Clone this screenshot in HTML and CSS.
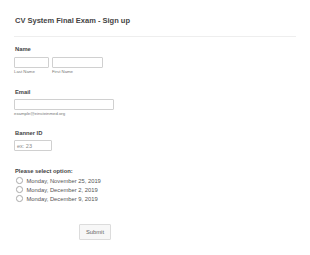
FILE: index.html
```html
<!DOCTYPE html>
<html>
<head>
<meta charset="utf-8">
<link rel="stylesheet" href="styles.css">
</head>
<body>
<form class="form">
  <h1 class="title">CV System Final Exam - Sign up</h1>
  <div class="rule"></div>

  <div class="field field-name">
    <div class="label">Name</div>
    <div class="name-row">
      <div class="sub">
        <div class="input input-last"></div>
        <div class="sublabel">Last Name</div>
      </div>
      <div class="sub">
        <div class="input input-first"></div>
        <div class="sublabel">First Name</div>
      </div>
    </div>
  </div>

  <div class="field field-email">
    <div class="label">Email</div>
    <div class="input input-email"></div>
    <div class="sublabel">example@einsteinmed.org</div>
  </div>

  <div class="field field-banner">
    <div class="label">Banner ID</div>
    <div class="input input-banner"><span class="placeholder">ex: 23</span></div>
  </div>

  <div class="field field-options">
    <div class="label">Please select option:</div>
    <div class="options">
      <div class="option"><span class="radio"></span><span>Monday, November 25, 2019</span></div>
      <div class="option"><span class="radio"></span><span>Monday, December 2, 2019</span></div>
      <div class="option"><span class="radio"></span><span>Monday, December 9, 2019</span></div>
    </div>
  </div>

  <div class="actions">
    <div class="button">Submit</div>
  </div>
</form>
</body>
</html>
```

FILE: styles.css
```css
html, body {
  margin: 0;
  padding: 0;
  background: #ffffff;
}
body {
  font-family: "Liberation Sans", Arial, sans-serif;
  color: #333;
}
.form {
  width: 282px;
  padding: 16px 0 0 14px;
  display: flex;
  flex-direction: column;
}
.title {
  margin: 0 0 0 1px;
  font-size: 7.5px;
  line-height: 9px;
  font-weight: bold;
  color: #444;
}
.rule {
  height: 1px;
  background: #eeeeee;
  margin-top: 11px;
}
.label {
  font-size: 5.8px;
  line-height: 7px;
  font-weight: bold;
  color: #444;
  margin-left: 1px;
}
.field-name { margin-top: 9px; }
.name-row {
  display: flex;
  gap: 3px;
  margin-top: 4px;
}
.input {
  height: 9px;
  border: 1px solid #d0d0d0;
  border-radius: 1px;
  background: #fff;
  box-sizing: content-box;
}
.input-last { width: 33px; }
.input-first { width: 49px; }
.input-email { width: 98px; margin-top: 3px; }
.input-banner {
  width: 36px;
  margin-top: 3px;
  display: flex;
  align-items: center;
}
.placeholder {
  font-size: 5.5px;
  color: #8a8a8a;
  margin-left: 2px;
}
.sublabel {
  font-size: 4.3px;
  line-height: 5px;
  color: #777;
  margin-top: 1px;
}
.field-email { margin-top: 15px; }
.field-banner { margin-top: 14px; }
.field-options { margin-top: 17px; }
.options {
  display: flex;
  flex-direction: column;
  margin-top: 1px;
}
.option {
  display: flex;
  align-items: center;
  height: 9px;
  font-size: 5.8px;
  color: #555;
}
.radio {
  width: 4.5px;
  height: 4.5px;
  border: 0.7px solid #aaa;
  border-radius: 50%;
  margin: 0 4px 0 2px;
}
.actions {
  display: flex;
  padding-left: 65px;
  margin-top: 21px;
}
.button {
  width: 30px;
  height: 14px;
  border: 1px solid #dcdcdc;
  border-radius: 1px;
  background: #f7f7f7;
  font-size: 5.8px;
  color: #666;
  display: flex;
  align-items: center;
  justify-content: center;
}
```
